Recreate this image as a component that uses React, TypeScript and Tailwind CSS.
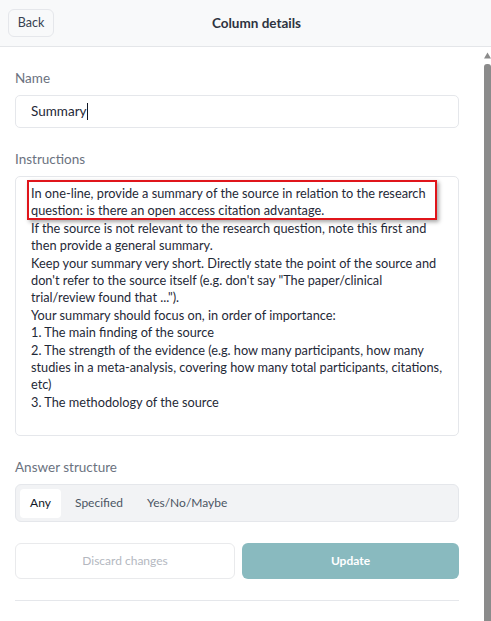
import React from "react";

const lines = [
  "If the source is not relevant to the research question, note this first and",
  "then provide a general summary.",
  "Keep your summary very short. Directly state the point of the source and",
  "don't refer to the source itself (e.g. don't say \"The paper/clinical",
  "trial/review found that ...\").",
  "Your summary should focus on, in order of importance:",
  "1. The main finding of the source",
  "2. The strength of the evidence (e.g. how many participants, how many",
  "studies in a meta-analysis, covering how many total participants, citations,",
  "etc)",
  "3. The methodology of the source",
];

export default function App() {
  return (
    <div
      className="w-[491px] h-[621px] overflow-hidden bg-white flex flex-col text-[#1f2937]"
      style={{ fontFamily: 'Lato, "Noto Sans", sans-serif' }}
    >
      {/* Header */}
      <div className="h-[47px] shrink-0 bg-[#f8f9fa] border-b border-[#e4e6e9] flex items-center relative px-2">
        <button className="h-[28px] w-[46px] rounded-[6px] border border-[#e5e7eb] bg-[#f8f9fa] text-[12.5px] text-[#374151]">
          Back
        </button>
        <div className="absolute left-0 right-0 top-0 h-[46px] flex items-center justify-center pointer-events-none">
          <span className="text-[13.5px] font-bold text-[#2d3340] pl-[22px]">Column details</span>
        </div>
      </div>

      {/* Body */}
      <div className="flex-1 flex min-h-0">
        <div className="w-[484px] shrink-0 pl-[15px] pr-[25px] pt-[22px] overflow-hidden">
          <div className="text-[13.5px] text-[#6b7280] leading-[18px]">Name</div>
          <div className="mt-[8px] h-[33px] rounded-[5px] border border-[#e5e7eb] flex items-center pl-[15px] text-[13.5px] text-[#1f2937]">
            Summary<span className="inline-block w-px h-[17px] bg-[#111827]" />
          </div>

          <div className="mt-[22px] text-[13.5px] text-[#6b7280] leading-[18px]">Instructions</div>
          <div className="mt-[8px] h-[260px] rounded-[5px] border border-[#e5e7eb] pl-[15px] pt-[8px] text-[12.75px] leading-[17.4px] text-[#1f2937] relative whitespace-nowrap overflow-hidden">
            <div>In one-line, provide a summary of the source in relation to the research</div>
            <div>question: is there an open access citation advantage.</div>
            {lines.map((l, i) => (
              <div key={i}>{l}</div>
            ))}
            <div className="absolute left-[11px] top-[3px] w-[410px] h-[40px] border-2 border-[#e0151b] shadow-[2px_2px_4px_rgba(0,0,0,0.35)]" />
          </div>

          <div className="mt-[22px] text-[13.5px] text-[#6b7280] leading-[18px]">Answer structure</div>
          <div className="mt-[8px] h-[38px] rounded-[6px] border border-[#e5e7eb] bg-[#f2f3f5] flex items-center px-[4px] gap-[4px] text-[12px]">
            <div className="h-[29px] w-[41px] rounded-[4px] bg-white flex items-center justify-center text-[#111827]">Any</div>
            <div className="h-[29px] px-[10px] flex items-center text-[#4b5563]">Specified</div>
            <div className="h-[29px] px-[10px] flex items-center text-[#4b5563]">Yes/No/Maybe</div>
          </div>

          <div className="mt-[21px] flex gap-[7px] h-[36px]">
            <button className="flex-1 rounded-[6px] border border-[#e9eaec] bg-white text-[12px] text-[#b4b8bf]">
              Discard changes
            </button>
            <button className="w-[217px] rounded-[6px] bg-[#89babf] text-[12px] font-bold text-white">
              Update
            </button>
          </div>

          <div className="mt-[21px] h-px bg-[#e5e7eb]" />
          <div className="mt-[17px] text-[13.5px] text-[#6b7280] leading-[18px]">Column actions</div>
        </div>

        {/* Scrollbar drawing */}
        <div className="w-[7px] shrink-0 flex flex-col items-stretch pt-[5px]">
          <svg width="7" height="7" viewBox="0 0 7 7" className="block">
            <polygon points="3.5,0.5 7,6.5 0,6.5" fill="#8b8b8b" />
          </svg>
          <div className="mt-[5px] flex-1 bg-[#8b8b8b] rounded-t-[3px]" />
        </div>
      </div>
    </div>
  );
}
